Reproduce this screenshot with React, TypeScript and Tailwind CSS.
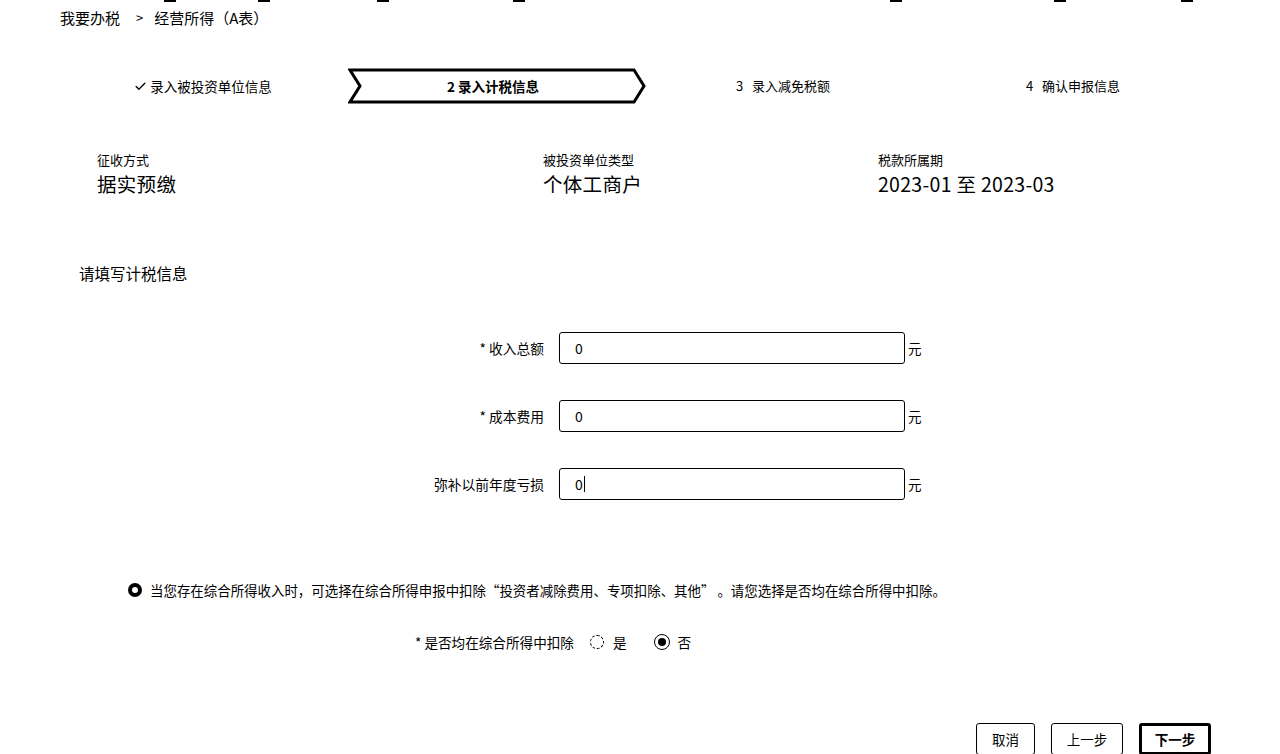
import { Check } from "lucide-react";

const FONT = { fontFamily: '"Noto Sans CJK SC", "Noto Sans", sans-serif' };

const TOP_MARKS = [164, 258, 377, 513, 890, 1054, 1181];

const FIELDS = [
  { label: "* 收入总额", value: "0" },
  { label: "* 成本费用", value: "0" },
  { label: "弥补以前年度亏损", value: "0", caret: true },
];

const SUMMARY = [
  { label: "征收方式", value: "据实预缴", w: "w-[446px]" },
  { label: "被投资单位类型", value: "个体工商户", w: "w-[335px]" },
  { label: "税款所属期", value: "2023-01 至 2023-03", w: "" },
];

function ActiveStep() {
  return (
    <div className="relative h-[36px] w-[298px] flex items-center justify-center">
      <svg className="absolute inset-0" width="298" height="36" viewBox="0 0 298 36">
        <polygon
          points="2,2 286,2 296,18 286,34 2,34 12,18"
          fill="#fff"
          stroke="#000"
          strokeWidth="3"
          strokeLinejoin="miter"
        />
      </svg>
      <span className="relative text-[13.5px] font-bold text-black">2 录入计税信息</span>
    </div>
  );
}

export default function App() {
  return (
    <div className="relative w-[1280px] h-[754px] overflow-hidden bg-white text-black" style={FONT}>
      {/* cut-off nav above */}
      <div className="relative h-[4px]">
        {TOP_MARKS.map((x) => (
          <div key={x} className="absolute top-0 h-[2px] w-[12px] bg-black" style={{ left: x }} />
        ))}
      </div>

      <div className="mt-[4px] pl-[60px] flex items-center h-[20px] text-[15px]">
        <span>我要办税</span>
        <span className="ml-[16px] mr-[11px] text-[13px]">&gt;</span>
        <span>经营所得（A表）</span>
      </div>

      {/* steps */}
      <div className="mt-[40px] ml-[58px] w-[1160px] grid grid-cols-4 items-center h-[36px] text-[13.5px]">
        <div className="flex items-center justify-center gap-[3px]">
          <Check size={13} strokeWidth={2.5} />
          <span>录入被投资单位信息</span>
        </div>
        <div className="flex items-center">
          <ActiveStep />
        </div>
        <div className="flex items-center justify-center gap-[9px] text-[13px]">
          <span>3</span>
          <span>录入减免税额</span>
        </div>
        <div className="flex items-center justify-center gap-[9px] text-[13px]">
          <span>4</span>
          <span>确认申报信息</span>
        </div>
      </div>

      {/* summary */}
      <div className="mt-[48px] pl-[97px] flex">
        {SUMMARY.map((s) => (
          <div key={s.label} className={s.w}>
            <div className="text-[13px] leading-[16px]">{s.label}</div>
            <div className="mt-[5px] text-[19.5px] leading-[22px] tracking-[0.3px]">{s.value}</div>
          </div>
        ))}
      </div>

      <div className="mt-[67px] pl-[79px] text-[15.5px] leading-[22px]">请填写计税信息</div>

      {/* form */}
      <div className="mt-[48px] flex flex-col gap-[36px]">
        {FIELDS.map((f) => (
          <div key={f.label} className="flex items-center h-[32px]">
            <div className="w-[545px] pr-[1px] text-right text-[13.75px]">{f.label}</div>
            <div className="ml-[14px] w-[346px] h-[32px] border border-black rounded-[3px] flex items-center pl-[15px] text-[14px]">
              <span>{f.value}</span>
              {f.caret && <span className="w-[1px] h-[16px] bg-black ml-[1px]" />}
            </div>
            <span className="ml-[3px] text-[13.5px]">元</span>
          </div>
        ))}
      </div>

      {/* notice */}
      <div className="mt-[80px] pl-[128px] flex items-center h-[20px] text-[13.45px]">
        <span className="w-[14px] h-[14px] rounded-full border-[4px] border-black" />
        <span className="ml-[8px]">
          当您存在综合所得收入时，可选择在综合所得申报中扣除“投资者减除费用、专项扣除、其他” 。请您选择是否均在综合所得中扣除。
        </span>
      </div>

      <div className="mt-[32px] pl-[415px] flex items-center h-[20px] text-[13.6px]">
        <span>* 是否均在综合所得中扣除</span>
        <span className="ml-[16px] w-[14px] h-[14px] rounded-full border border-dashed border-black" />
        <span className="ml-[9px]">是</span>
        <span className="ml-[27px] w-[16px] h-[16px] rounded-full border border-black flex items-center justify-center">
          <span className="w-[8px] h-[8px] rounded-full bg-black" />
        </span>
        <span className="ml-[8px]">否</span>
      </div>

      {/* buttons */}
      <div className="mt-[71px] pr-[69px] flex justify-end gap-[16px] text-[13.5px]">
        <button className="w-[59px] h-[32px] border border-black rounded-[3px] bg-white">取消</button>
        <button className="w-[72px] h-[32px] border border-black rounded-[3px] bg-white">上一步</button>
        <button className="w-[72px] h-[32px] border-[3px] border-black rounded-[3px] bg-white font-bold">下一步</button>
      </div>
    </div>
  );
}
